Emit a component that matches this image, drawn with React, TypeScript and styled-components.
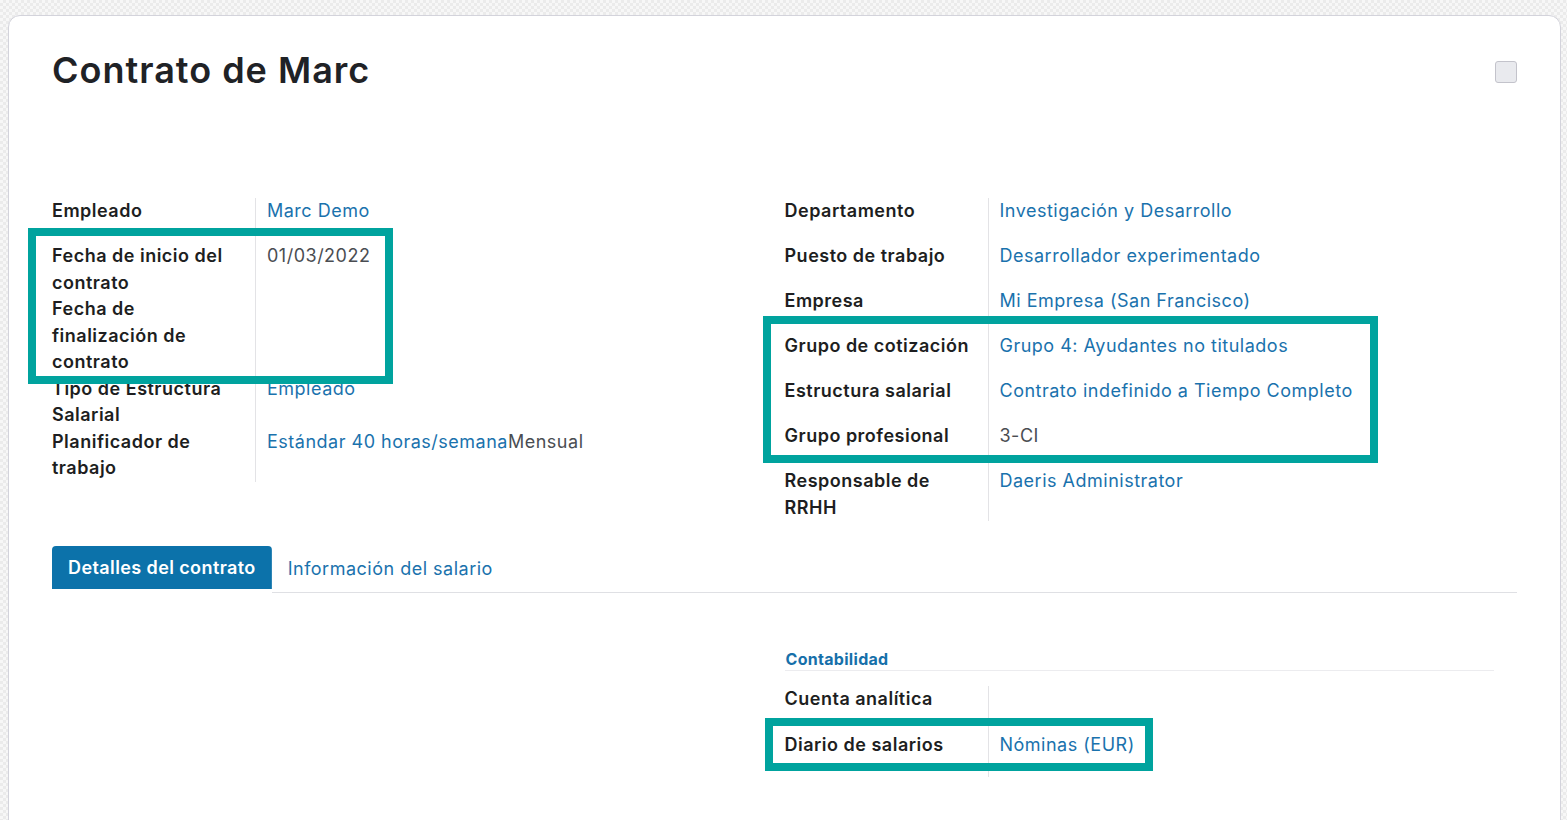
import React from 'react';
import styled, { createGlobalStyle } from 'styled-components';

const GlobalStyle = createGlobalStyle`
  html, body { margin: 0; padding: 0; overflow: hidden; }
  body {
    background-color: #f3f3f3;
    background-image: repeating-conic-gradient(#ebebeb 0% 25%, #f7f7f7 0% 50%);
    background-size: 6px 6px;
    font-family: Inter, "Open Sans", sans-serif;
    color: #212529;
  }
  * { box-sizing: border-box; }
`;

const BLUE = '#1a72ad';
const TEAL = '#00a39e';

const Sheet = styled.div`
  margin: 15px 6px 0 8px;
  background: #fff;
  border: 1px solid #d3d3db;
  border-radius: 12px;
  min-height: 860px;
  padding: 32px 43px 0 43px;
  letter-spacing: 0.5px;
`;

const Header = styled.div`
  display: flex;
  justify-content: space-between;
  align-items: flex-start;
  margin-bottom: 106px;
`;

const Title = styled.h1`
  margin: 0;
  font-size: 36px;
  line-height: 44px;
  font-weight: 600;
  letter-spacing: 1px;
  color: #1f2226;
`;

const Check = styled.span`
  display: block;
  width: 22px;
  height: 22px;
  margin-top: 13px;
  background: #e9eaee;
  border: 1px solid #c3c3cb;
  border-radius: 3px;
`;

const Columns = styled.div`
  display: grid;
  grid-template-columns: 1fr 1fr;
`;

const Group = styled.div`
  display: flex;
  flex-direction: column;
`;

const Row = styled.div<{ $tall?: boolean }>`
  display: grid;
  grid-template-columns: 204px 1fr;
  min-height: ${(p) => (p.$tall ? 46 : 45)}px;
  font-size: 18px;
  line-height: 26.5px;
`;

const Label = styled.div`
  font-weight: 600;
  color: #1d1e21;
  padding-right: 12px;
  border-right: 1px solid #e3e3e6;
`;

const Value = styled.div<{ $muted?: boolean }>`
  padding-left: 11px;
  color: ${(p) => (p.$muted ? '#4a4d52' : BLUE)};
`;

const Muted = styled.span`
  color: #4a4d52;
`;

const Marked = styled.div`
  position: relative;
  display: flex;
  flex-direction: column;
`;

const Highlight = styled.div<{ $top: number; $left: number; $w: number; $h: number }>`
  position: absolute;
  top: ${(p) => p.$top}px;
  left: ${(p) => p.$left}px;
  width: ${(p) => p.$w}px;
  height: ${(p) => p.$h}px;
  border: 8px solid ${TEAL};
  pointer-events: none;
`;

const TabBar = styled.div`
  display: flex;
  align-items: flex-end;
  margin-top: 25px;
  border-bottom: 1px solid #dfe0e4;
`;

const Tab = styled.div<{ $active?: boolean }>`
  height: 47px;
  padding: 0 16px;
  margin-bottom: -1px;
  display: flex;
  align-items: center;
  font-size: 18px;
  padding-bottom: 4px;
  border-radius: 4px 4px 0 0;
  ${(p) =>
    p.$active
      ? `background: linear-gradient(#0c72aa, #0c72aa) top / 100% 43px no-repeat, #fff;
         color: #fff; font-weight: 600; letter-spacing: 0.4px;`
      : `color: ${BLUE}; font-weight: 400; padding-top: 2px;`}
`;

const Page = styled.div`
  display: grid;
  grid-template-columns: 1fr 1fr;
  padding-top: 55px;
`;

const SectionTitle = styled.div`
  font-size: 16px;
  line-height: 22px;
  font-weight: 700;
  letter-spacing: 0.3px;
  color: #1670aa;
  padding-left: 1px;
  margin-right: 23px;
  border-bottom: 1px solid #ececef;
  margin-bottom: 15px;
`;

export default function App() {
  return (
    <>
      <GlobalStyle />
      <Sheet>
        <Header>
          <Title>Contrato de Marc</Title>
          <Check />
        </Header>
        <Columns>
          <Group>
            <Row>
              <Label>Empleado</Label>
              <Value>Marc Demo</Value>
            </Row>
            <Marked>
              <Row>
                <Label>Fecha de inicio del contrato</Label>
                <Value $muted>01/03/2022</Value>
              </Row>
              <Row>
                <Label>Fecha de finalización de contrato</Label>
                <Value />
              </Row>
              <Highlight $top={-15} $left={-24} $w={365} $h={156} />
            </Marked>
            <Row>
              <Label>Tipo de Estructura Salarial</Label>
              <Value>Empleado</Value>
            </Row>
            <Row>
              <Label>Planificador de trabajo</Label>
              <Value>
                Estándar 40 horas/semana<Muted>Mensual</Muted>
              </Value>
            </Row>
          </Group>
          <Group>
            <Row>
              <Label>Departamento</Label>
              <Value>Investigación y Desarrollo</Value>
            </Row>
            <Row>
              <Label>Puesto de trabajo</Label>
              <Value>Desarrollador experimentado</Value>
            </Row>
            <Row>
              <Label>Empresa</Label>
              <Value>Mi Empresa (San Francisco)</Value>
            </Row>
            <Marked>
              <Row>
                <Label>Grupo de cotización</Label>
                <Value>Grupo 4: Ayudantes no titulados</Value>
              </Row>
              <Row>
                <Label>Estructura salarial</Label>
                <Value>Contrato indefinido a Tiempo Completo</Value>
              </Row>
              <Row>
                <Label>Grupo profesional</Label>
                <Value $muted>3-CI</Value>
              </Row>
              <Highlight $top={-17} $left={-22} $w={615} $h={147} />
            </Marked>
            <Row>
              <Label>Responsable de RRHH</Label>
              <Value>Daeris Administrator</Value>
            </Row>
          </Group>
        </Columns>
        <TabBar>
          <Tab $active>Detalles del contrato</Tab>
          <Tab>Información del salario</Tab>
        </TabBar>
        <Page>
          <div />
          <Group>
            <SectionTitle>Contabilidad</SectionTitle>
            <Row $tall>
              <Label>Cuenta analítica</Label>
              <Value />
            </Row>
            <Marked>
              <Row>
                <Label>Diario de salarios</Label>
                <Value>Nóminas (EUR)</Value>
              </Row>
              <Highlight $top={-14} $left={-20} $w={388} $h={53} />
            </Marked>
          </Group>
        </Page>
      </Sheet>
    </>
  );
}
